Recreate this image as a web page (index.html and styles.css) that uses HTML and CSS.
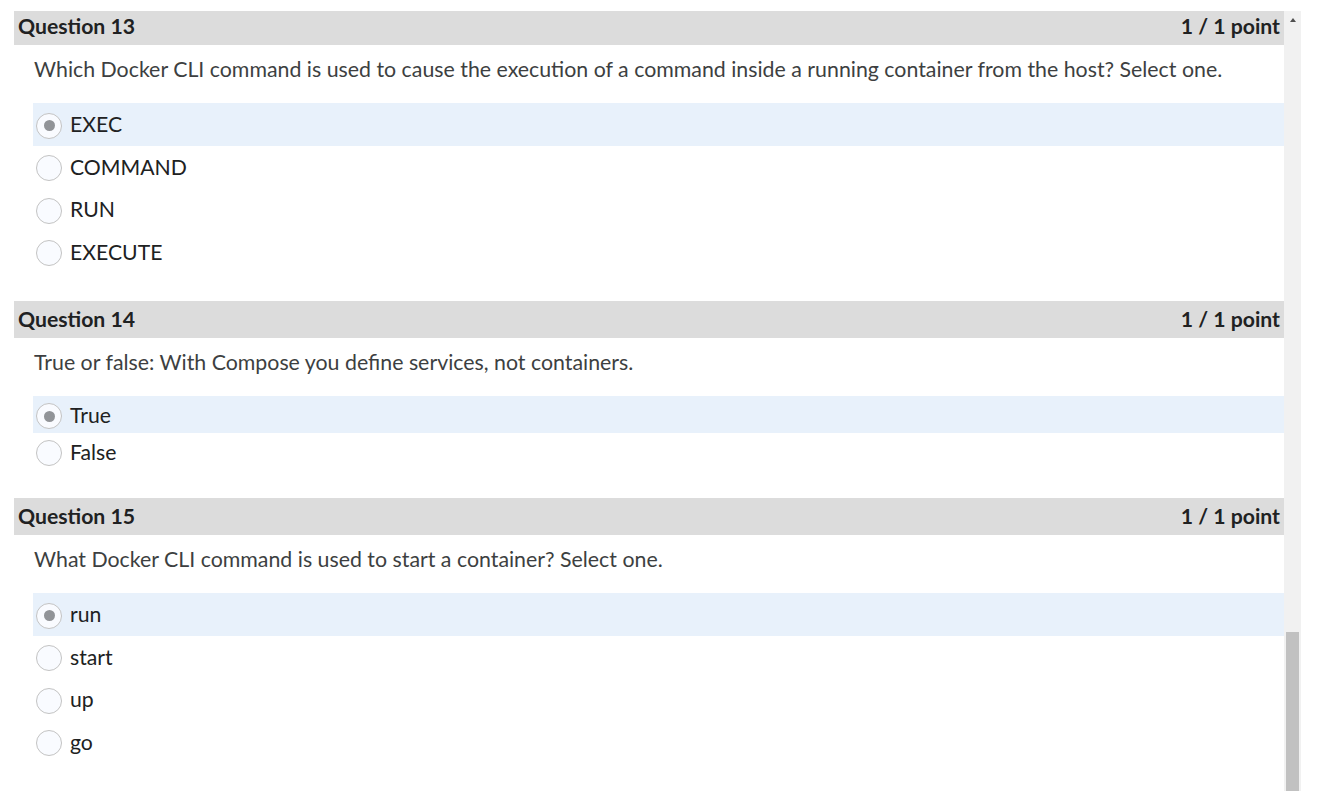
FILE: index.html
```html
<!DOCTYPE html>
<html lang="en">
<head>
<meta charset="utf-8">
<title>Quiz</title>
<link rel="stylesheet" href="styles.css">
</head>
<body>
<div class="frame">
  <div class="content">
    <div class="inner">
      <section class="question">
        <div class="q-head"><span>Question 13</span><span>1 / 1 point</span></div>
        <p class="q-text">Which Docker CLI command is used to cause the execution of a command inside a running container from the host? Select one.</p>
        <div class="opts">
          <div class="opt tall selected"><span class="radio checked"></span><span>EXEC</span></div>
          <div class="opt tall"><span class="radio"></span><span>COMMAND</span></div>
          <div class="opt tall"><span class="radio"></span><span>RUN</span></div>
          <div class="opt tall"><span class="radio"></span><span>EXECUTE</span></div>
        </div>
      </section>
      <section class="question">
        <div class="q-head"><span>Question 14</span><span>1 / 1 point</span></div>
        <p class="q-text">True or false: With Compose you define services, not containers.</p>
        <div class="opts">
          <div class="opt short selected"><span class="radio checked"></span><span>True</span></div>
          <div class="opt short"><span class="radio"></span><span>False</span></div>
        </div>
      </section>
      <section class="question">
        <div class="q-head"><span>Question 15</span><span>1 / 1 point</span></div>
        <p class="q-text">What Docker CLI command is used to start a container? Select one.</p>
        <div class="opts">
          <div class="opt tall selected"><span class="radio checked"></span><span>run</span></div>
          <div class="opt tall"><span class="radio"></span><span>start</span></div>
          <div class="opt tall"><span class="radio"></span><span>up</span></div>
          <div class="opt tall"><span class="radio"></span><span>go</span></div>
        </div>
      </section>
    </div>
  </div>
  <div class="scrollbar">
    <div class="sb-btn"><span class="sb-arrow"></span></div>
    <div class="sb-thumb"></div>
  </div>
</div>
</body>
</html>
```
FILE: styles.css
```css
html, body {
  margin: 0;
  padding: 0;
  background: #ffffff;
}
body {
  font-family: Lato, "Open Sans", "Liberation Sans", sans-serif;
  color: #202122;
}
.frame {
  display: flex;
  margin: 11px 0 0 14px;
  width: 1287px;
  height: 780px;
}
.content {
  flex: 1;
  overflow: hidden;
}
.inner {
  margin-top: -3px;
}
.question {
  margin-bottom: 28px;
}
.q-head {
  display: flex;
  justify-content: space-between;
  align-items: center;
  height: 37px;
  padding: 0 4px 2px 4px;
  box-sizing: border-box;
  background: #dcdcdc;
  font-weight: 700;
  font-size: 21.2px;
  line-height: 24px;
  color: #202122;
}
.q-text {
  margin: 12px 0 22px 20px;
  font-size: 21.33px;
  line-height: 24px;
  color: #3d3f41;
}
.opts {
  margin-left: 19px;
}
.opt {
  display: flex;
  align-items: center;
  gap: 8px;
  padding-left: 3px;
  font-size: 21.2px;
  color: #202122;
}
.opt.tall {
  height: 42.5px;
}
.opt.short {
  height: 37px;
}
.opt.selected {
  background: #e8f1fb;
}
.radio {
  box-sizing: border-box;
  flex: none;
  width: 26px;
  height: 26px;
  border: 1px solid #c3c3c3;
  border-radius: 50%;
  background: #f9fbff;
  display: flex;
  align-items: center;
  justify-content: center;
  margin-top: 3px;
}
.radio.checked::after {
  content: "";
  width: 11px;
  height: 11px;
  border-radius: 50%;
  background: #919498;
}
.scrollbar {
  width: 17px;
  background: #f1f1f1;
  display: flex;
  flex-direction: column;
}
.sb-btn {
  height: 17px;
  display: flex;
  justify-content: center;
  align-items: center;
}
.sb-arrow {
  width: 0;
  height: 0;
  border-left: 3.5px solid transparent;
  border-right: 3.5px solid transparent;
  border-bottom: 4px solid #505050;
}
.sb-thumb {
  margin: 604px 2px 0 2px;
  flex: 1;
  background: #c1c1c1;
}
```
